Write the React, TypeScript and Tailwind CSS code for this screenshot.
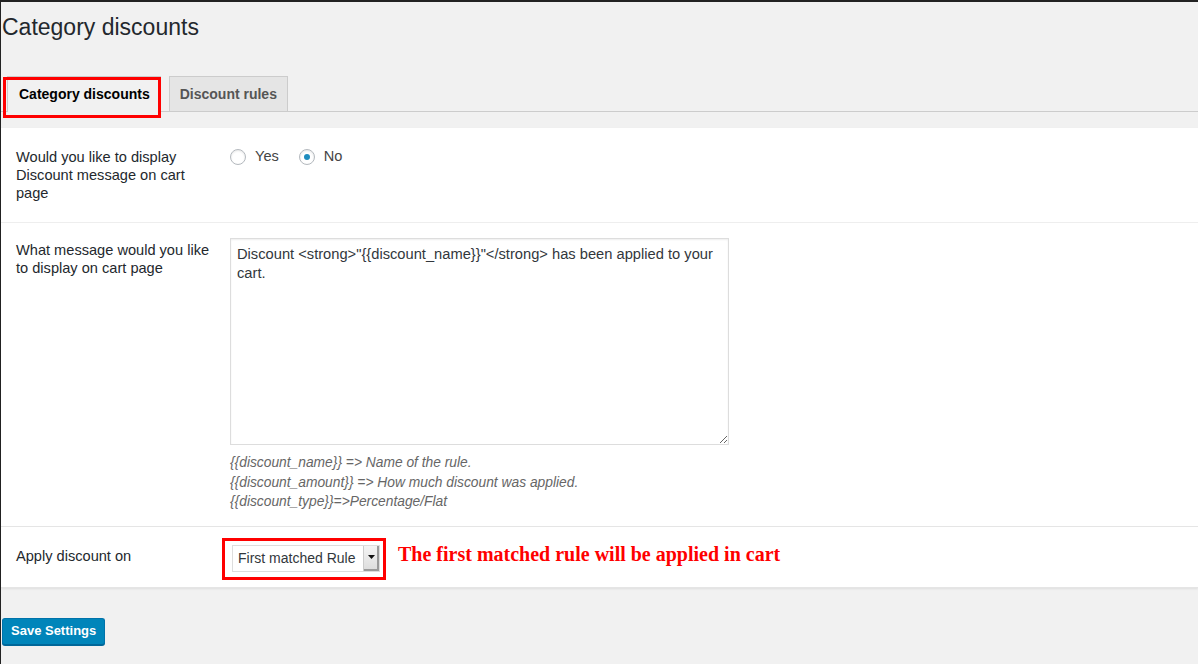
import React from 'react';

const Radio: React.FC<{ label: string; checked?: boolean }> = ({ label, checked = false }) => (
  <label className="flex items-center gap-[9px] text-[14.6px] text-[#444]">
    <span className="flex h-4 w-4 items-center justify-center rounded-full border border-[#b4b9be] bg-white shadow-[inset_0_1px_2px_rgba(0,0,0,0.1)]">
      {checked && <span className="h-[6px] w-[6px] rounded-full bg-[#1e8cbe]" />}
    </span>
    <span>{label}</span>
  </label>
);

const App: React.FC = () => {
  return (
    <div className="min-h-[664px] border-t-2 border-l border-[#222] bg-[#f1f1f1] font-['Liberation_Sans',Arial,sans-serif] text-[#23282d]">
      {/* Page title */}
      <h1 className="pt-[11px] pl-px text-[23px] leading-[29px] font-normal text-[#23282d]">
        Category discounts
      </h1>

      {/* Tabs */}
      <div className="mt-[35px] flex h-[35px] items-end gap-[8px] border-b border-[#ccc] pl-[6px]">
        <div className="relative">
          <div className="relative -mb-px flex h-[36px] items-center border border-b-0 border-[#ccc] bg-[#f1f1f1] pr-[10px] pl-[11px] text-[14px] font-bold text-[#000]">
            Category discounts
          </div>
          <span className="pointer-events-none absolute top-[1px] -left-[4px] right-0 -bottom-[7px] border-[3px] border-[#ff0000]" />
        </div>
        <div className="-mb-px flex h-[36px] items-center border border-[#ccc] bg-[#e5e5e5] px-[10px] text-[14px] font-bold text-[#555]">
          Discount rules
        </div>
      </div>

      {/* Settings panel */}
      <div className="mt-4 border-b border-[#e5e5e5] bg-white shadow-[0_1px_2px_rgba(0,0,0,0.08)]">
        {/* Row 1 */}
        <div className="flex border-b border-[#eee] pt-5 pb-5 pl-[15px]">
          <div className="w-[214px] pr-[18px] text-[14.6px] leading-[18px] text-[#23282d]">
            Would you like to display Discount message on cart page
          </div>
          <div className="flex h-[18px] items-center gap-5">
            <Radio label="Yes" />
            <Radio label="No" checked />
          </div>
        </div>

        {/* Row 2 */}
        <div className="flex border-b border-[#e5e5e5] pt-[15px] pb-[14px] pl-[15px]">
          <div className="w-[214px] pt-[3px] pr-[18px] text-[14.6px] leading-[18px] text-[#23282d]">
            What message would you like to display on cart page
          </div>
          <div>
            <textarea
              readOnly
              defaultValue={'Discount <strong>"{{discount_name}}"</strong> has been applied to your cart.'}
              className="block h-[207px] w-[499px] resize border border-[#ddd] bg-white px-[6px] py-[6px] text-[14.7px] leading-[19px] text-[#32373c] shadow-[inset_0_1px_2px_rgba(0,0,0,0.07)] outline-none"
            />
            <div className="mt-2 text-[13.8px] leading-[19.5px] italic text-[#666]">
              <div>{'{{discount_name}} => Name of the rule.'}</div>
              <div>{'{{discount_amount}} => How much discount was applied.'}</div>
              <div>{'{{discount_type}}=>Percentage/Flat'}</div>
            </div>
          </div>
        </div>

        {/* Row 3 */}
        <div className="flex pt-[18px] pb-[15px] pl-[15px]">
          <div className="w-[216px] pt-[2px] text-[14.6px] leading-[18px] text-[#23282d]">
            Apply discount on
          </div>
          <div className="relative">
            <div className="flex h-[27px] w-[148px] border border-[#ddd] bg-white">
              <span className="flex flex-1 items-center pl-[5px] text-[14px] text-[#32373c]">First matched Rule</span>
              <span className="flex w-[16px] items-center justify-center border-l border-[#ccc] bg-[linear-gradient(#f4f4f4,#dcdcdc)] shadow-[inset_-2px_-2px_0_#9a9a9a]">
                <svg width="7" height="4" viewBox="0 0 7 4" className="-mt-[2px] -ml-[1px]">
                  <path d="M0 0h7L3.5 4z" fill="#111" />
                </svg>
              </span>
            </div>
            <span className="pointer-events-none absolute -top-[7px] -left-[10px] -right-[6px] -bottom-[8px] border-[3px] border-[#ff0000]" />
          </div>
          <div className="-mt-[4px] ml-[18px] font-['Liberation_Serif','Times_New_Roman',serif] text-[20px] leading-[26px] font-bold text-[#ff0000]">
            The first matched rule will be applied in cart
          </div>
        </div>
      </div>

      {/* Save */}
      <div className="mt-[30px] pl-px">
        <button className="h-[27px] rounded-[3px] border border-[#0073aa] border-b-[#006799] bg-[#0085ba] px-[8px] text-[13px] font-bold text-white shadow-[0_1px_0_#006799]">
          Save Settings
        </button>
      </div>
    </div>
  );
};

export default App;
